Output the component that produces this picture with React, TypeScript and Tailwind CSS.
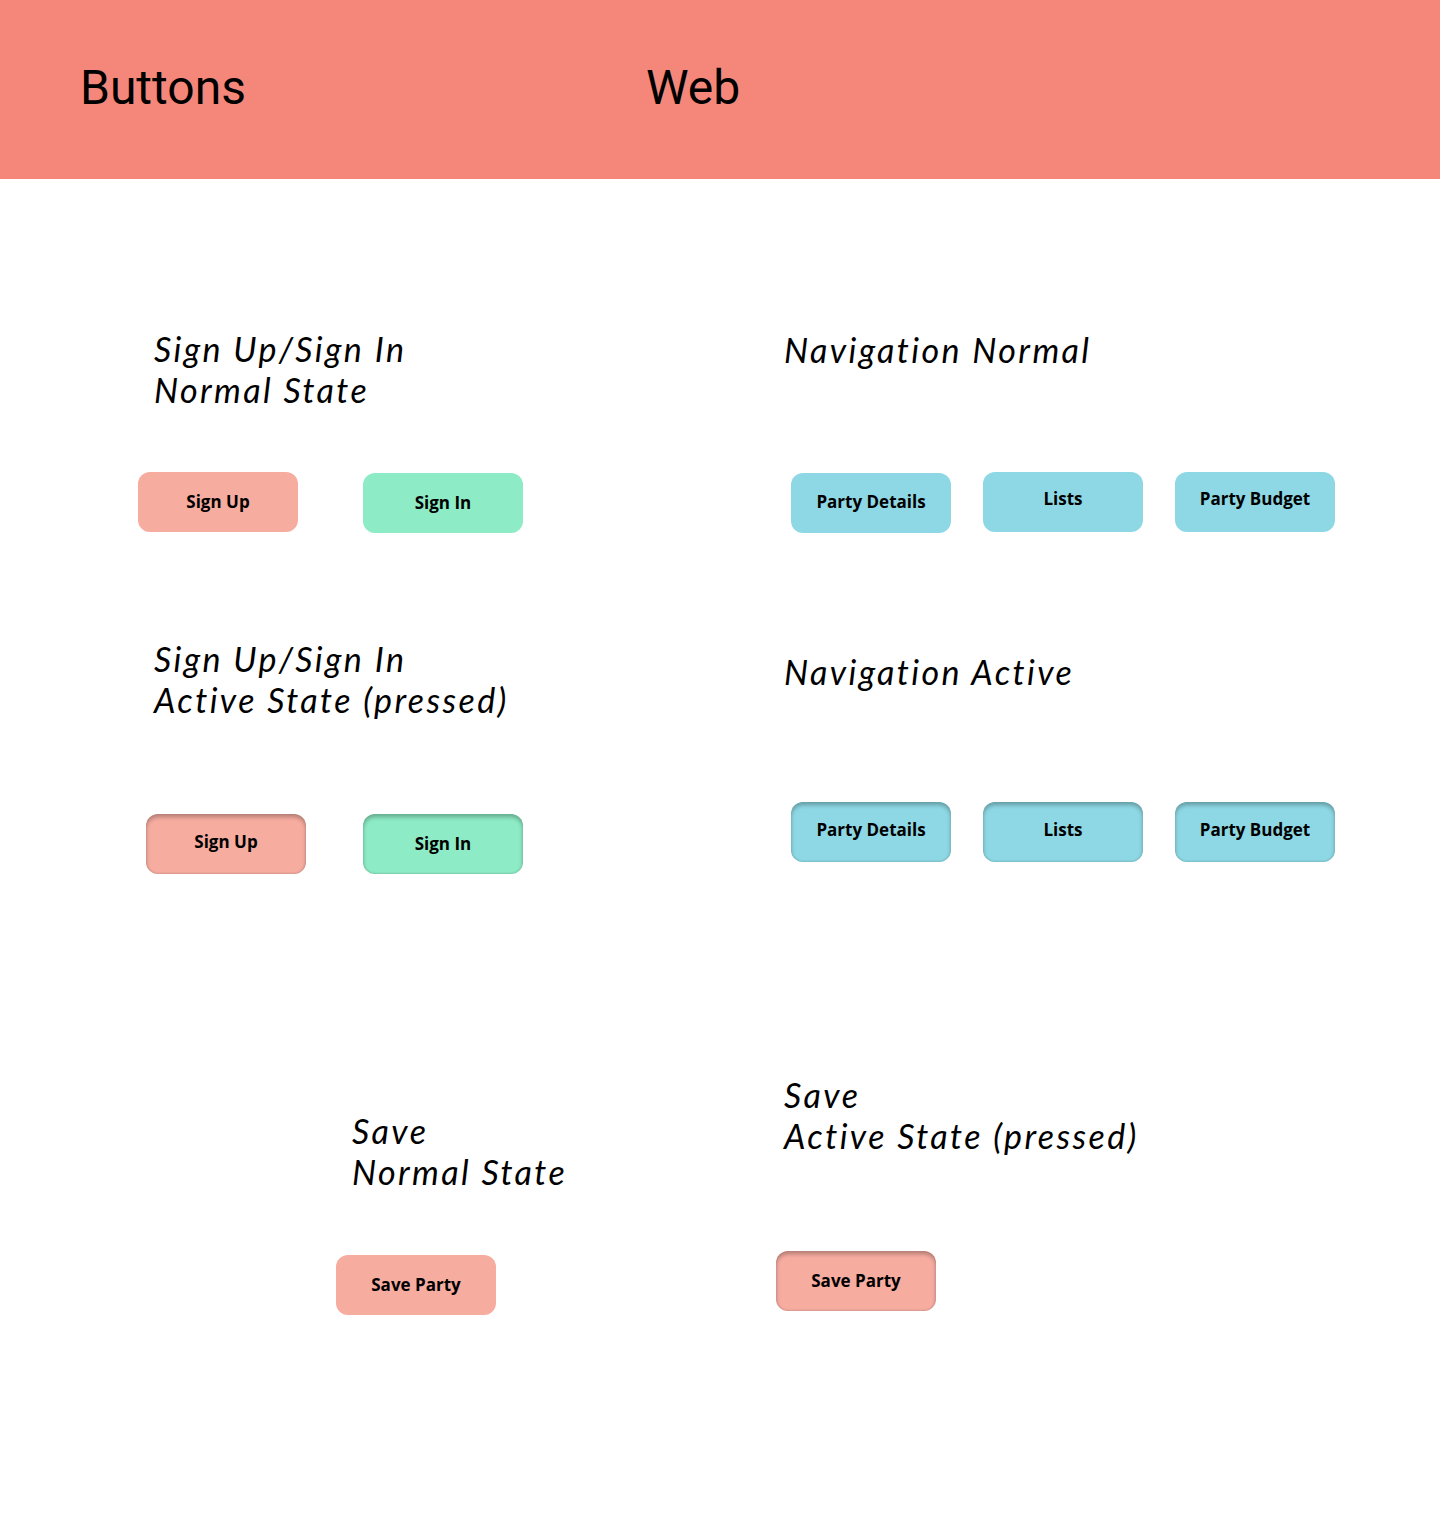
import React from "react";

type Tone = "coral" | "mint" | "sky";

const tones: Record<Tone, string> = {
  coral: "bg-[#f7aca0]",
  mint: "bg-[#8debc5]",
  sky: "bg-[#8dd8e4]",
};

function Btn({
  label,
  tone,
  pressed = false,
  className = "",
}: {
  label: string;
  tone: Tone;
  pressed?: boolean;
  className?: string;
}) {
  return (
    <button
      type="button"
      className={`flex h-[60px] w-[160px] shrink-0 items-center justify-center rounded-[12px] text-[17px] font-bold text-black ${tones[tone]} ${
        pressed ? "shadow-[inset_0_3px_4px_rgba(0,0,0,0.28),inset_0_-1px_2px_rgba(0,0,0,0.12)]" : ""
      } ${className}`}
      style={{ fontFamily: '"Open Sans", "Liberation Sans", sans-serif' }}
    >
      {label}
    </button>
  );
}

function Label({ lines, className = "" }: { lines: string[]; className?: string }) {
  return (
    <p
      className={`text-[34px] italic leading-[41px] tracking-[2.4px] text-black ${className}`}
      style={{ fontFamily: 'Lato, "Open Sans", sans-serif' }}
    >
      {lines.map((l) => (
        <span key={l} className="block whitespace-nowrap">
          {l}
        </span>
      ))}
    </p>
  );
}

export default function App() {
  return (
    <div className="min-h-[1529px] bg-white">
      <header
        className="flex h-[179px] items-center bg-[#f5877a] pb-[3px] text-[48px] text-black"
        style={{ fontFamily: 'Roboto, "Liberation Sans", sans-serif' }}
      >
        <span className="w-[646px] pl-[80px]">Buttons</span>
        <span>Web</span>
      </header>

      <main className="flex">
        {/* left column */}
        <section className="flex w-[760px] flex-col">
          <Label lines={["Sign Up/Sign In", "Normal State"]} className="ml-[154px] mt-[149px]" />
          <div className="ml-[138px] mt-[62px] flex items-start gap-[65px]">
            <Btn label="Sign Up" tone="coral" />
            <Btn label="Sign In" tone="mint" className="mt-px" />
          </div>

          <Label lines={["Sign Up/Sign In", "Active State (pressed)"]} className="ml-[154px] mt-[105px]" />
          <div className="ml-[146px] mt-[94px] flex items-start gap-[57px]">
            <Btn label="Sign Up" tone="coral" pressed className="pb-[4px]" />
            <Btn label="Sign In" tone="mint" pressed />
          </div>

          <Label lines={["Save", "Normal State"]} className="ml-[352px] mt-[236px]" />
          <div className="ml-[336px] mt-[63px] flex">
            <Btn label="Save Party" tone="coral" />
          </div>
        </section>

        {/* right column */}
        <section className="flex flex-1 flex-col">
          <Label lines={["Navigation Normal"]} className="ml-[24px] mt-[150px]" />
          <div className="ml-[31px] mt-[102px] flex items-start gap-[32px]">
            <Btn label="Party Details" tone="sky" className="mt-px pb-[3px]" />
            <Btn label="Lists" tone="sky" className="pb-[6px]" />
            <Btn label="Party Budget" tone="sky" className="pb-[6px]" />
          </div>

          <Label lines={["Navigation Active"]} className="ml-[24px] mt-[118px]" />
          <div className="ml-[31px] mt-[110px] flex items-start gap-[32px]">
            <Btn label="Party Details" tone="sky" pressed className="pb-[4px]" />
            <Btn label="Lists" tone="sky" pressed className="pb-[5px]" />
            <Btn label="Party Budget" tone="sky" pressed className="pb-[4px]" />
          </div>

          <Label lines={["Save", "Active State (pressed)"]} className="ml-[24px] mt-[212px]" />
          <div className="ml-[16px] mt-[95px] flex">
            <Btn label="Save Party" tone="coral" pressed />
          </div>
        </section>
      </main>
    </div>
  );
}
